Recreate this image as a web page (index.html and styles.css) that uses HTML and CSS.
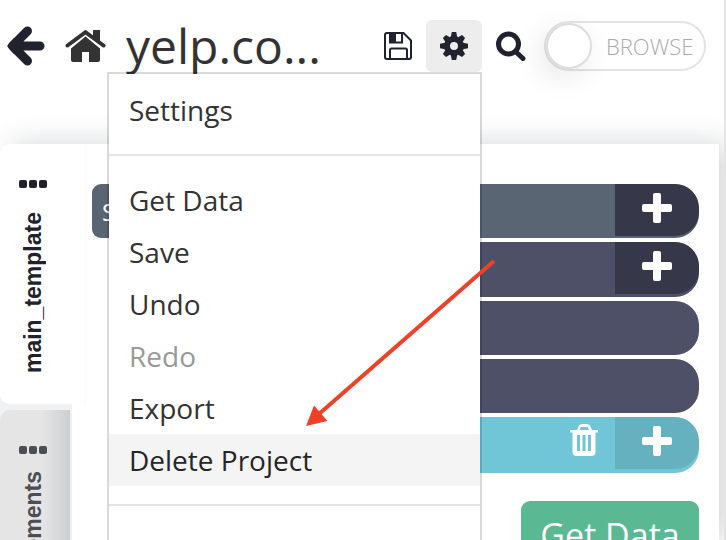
FILE: index.html
```
<!DOCTYPE html>
<html lang="en">
<head>
  <meta charset="UTF-8" />
  <meta name="viewport" content="width=device-width, initial-scale=1.0"/>
  <title>yelp.com project</title>
  <link rel="stylesheet" href="styles.css">
</head>
<body>

  <svg class="sprites" aria-hidden="true">
    <symbol id="plus" viewBox="0 0 30 30">
      <path d="M13 0h4a2 2 0 0 1 2 2v9h9a2 2 0 0 1 2 2v4a2 2 0 0 1-2 2h-9v9a2 2 0 0 1-2 2h-4a2 2 0 0 1-2-2v-9H2a2 2 0 0 1-2-2v-4a2 2 0 0 1 2-2h9V2a2 2 0 0 1 2-2z"/>
    </symbol>
    <symbol id="trash" viewBox="0 0 30 32">
      <path fill-rule="evenodd" d="M8 6l2-4.500Q11 0 13 0h5q2 0 3 1.500L23 6h6v2.500h-2.500V28q0 4-4 4h-15q-4 0-4-4V8.500H1V6zM10.500 6h9.500l-1.300-3h-6.900zM8 11v16h3V11zM13.500 11v16h3V11zM19 11v16h3V11z"/>
    </symbol>
  </svg>

  <header class="toolbar">
    <a class="back" href="#" aria-label="Back">
      <svg width="38" height="40" viewBox="0 0 38 40">
        <path class="icon-line" d="M20.500 5L5.500 20l15 15M7 20h26"/>
        <path d="M0 20L7 12h8v16H7z"/>
      </svg>
    </a>
    <a class="home" href="#" aria-label="Home">
      <svg width="41" height="33" viewBox="0 0 41 33">
        <path d="M28 0h7v12.500L28 7z"/>
        <path d="M20.500 6.500L35 18.500V30q0 2-2 2h-9V22h-7v10H8q-2 0-2-2V18.500z"/>
        <path class="roof" d="M2.500 15.500L20.500 2.200 38.500 15.500"/>
      </svg>
    </a>
    <h1>yelp.co...</h1>
    <button class="save" type="button" aria-label="Save">
      <svg width="28" height="28" viewBox="0 0 28 28">
        <path class="disk" d="M3 1h16.500L27 8.500V25q0 2-2 2H3q-2 0-2-2V3q0-2 2-2zM6 1v9.500h12V1M6 27V18q0-1.500 1.500-1.500h14q1.500 0 1.500 1.500v9"/>
        <path d="M6 1h6v9H6z"/>
      </svg>
    </button>
    <div class="dropdown">
      <button class="gear" type="button" aria-label="Options" aria-expanded="true">
        <svg width="28" height="28" viewBox="-14 -14 28 28">
          <circle class="gear-ring" r="7"/>
          <path d="M-3.200-9L-2.200-14h4.400l1 5zM-3.200 9L-2.200 14h4.400l1-5zM-9-3.200L-14-2.200v4.400l5 1zM9-3.200L14-2.200v4.400l-5 1z"/>
          <path transform="rotate(45)" d="M-3.200-9L-2.200-13.500h4.400l1 4.500zM-3.200 9L-2.200 13.500h4.400l1-4.500zM-9-3.200L-13.500-2.200v4.400l4.500 1zM9-3.200L13.500-2.200v4.400l-4.500 1z"/>
        </svg>
      </button>
      <ul class="menu">
        <li><a href="#">Settings</a></li>
        <li class="divider"></li>
        <li><a href="#">Get Data</a></li>
        <li><a href="#">Save</a></li>
        <li><a href="#">Undo</a></li>
        <li><a class="disabled" href="#">Redo</a></li>
        <li><a href="#">Export</a></li>
        <li><a class="active" href="#">Delete Project</a></li>
        <li class="divider"></li>
      </ul>
    </div>
    <button class="search" type="button" aria-label="Search">
      <svg width="30" height="30" viewBox="0 0 30 30">
        <circle class="lens" cx="12.500" cy="13" r="10"/>
        <path class="handle" d="M20 21l7 6.500"/>
      </svg>
    </button>
    <label class="switch">
      <input type="checkbox">
      <span class="knob"></span>
      <span>BROWSE</span>
    </label>
  </header>

  <main class="panel">
    <nav class="tabs">
      <a class="tab current" href="#">
        <span class="dots"><i></i><i></i><i></i></span>
        <span class="tab-name">main_template</span>
      </a>
      <a class="tab" href="#">
        <span class="dots"><i></i><i></i><i></i></span>
        <span class="tab-name">elements</span>
      </a>
    </nav>
    <section class="commands">
      <div class="command page">
        <span>Select</span>
        <button class="add" type="button" aria-label="Add"><svg width="30" height="30"><use href="#plus"/></svg></button>
      </div>
      <div class="command child group">
        <button class="add" type="button" aria-label="Add"><svg width="30" height="30"><use href="#plus"/></svg></button>
      </div>
      <div class="command child"></div>
      <div class="command child"></div>
      <div class="command child selected">
        <button class="trash" type="button" aria-label="Delete"><svg width="30" height="32"><use href="#trash"/></svg></button>
        <button class="add" type="button" aria-label="Add"><svg width="30" height="30"><use href="#plus"/></svg></button>
      </div>
      <button class="get-data" type="button">Get Data</button>
    </section>
  </main>

  <svg class="pointer" width="190" height="168" viewBox="0 0 190 168" aria-hidden="true">
    <path class="shaft" d="M188 2L13 155"/>
    <path d="M0 167L8 146.500 21.500 162z"/>
  </svg>

</body>
</html>
```

FILE: styles.css
```
* {
  box-sizing: border-box;
}

body {
  position: relative;
  display: flex;
  flex-direction: column;
  height: 100vh;
  margin: 0;
  overflow: hidden;
  border-right: 2px solid #e4e4e4;
  background-color: #fff;
  color: #333;
  font-family: 'Open Sans', 'Noto Sans', sans-serif;
}

a {
  color: inherit;
  text-decoration: none;
}

button {
  display: flex;
  align-items: center;
  justify-content: center;
  border: none;
  padding: 0;
  background: none;
  color: #20222d;
  font-family: inherit;
  cursor: pointer;
}

svg {
  display: block;
  fill: currentColor;
}

.sprites {
  position: absolute;
  width: 0;
  height: 0;
}

/* toolbar */

.toolbar {
  position: relative;
  z-index: 2;
  display: flex;
  align-items: center;
  height: 92px;
  padding: 0 18px 0 7px;
  flex-shrink: 0;
}

.back {
  margin-right: 20px;
  color: #20222d;
}

.icon-line {
  fill: none;
  stroke: currentColor;
  stroke-width: 9;
  stroke-linecap: round;
  stroke-linejoin: round;
}

.home {
  margin-right: 20px;
}

.roof {
  fill: none;
  stroke: currentColor;
  stroke-width: 4;
  stroke-linecap: round;
}

h1 {
  flex: 1;
  margin: 0;
  font-size: 48px;
  font-weight: 400;
  line-height: 68px;
  white-space: nowrap;
}

.save {
  margin-right: 14px;
}

.disk {
  fill: none;
  stroke: currentColor;
  stroke-width: 2;
}

.dropdown {
  position: relative;
  margin-right: 14px;
}

.gear {
  width: 56px;
  height: 52px;
  border-radius: 6px;
  background-color: #ededed;
}

.gear-ring {
  fill: none;
  stroke: currentColor;
  stroke-width: 6;
}

.lens,
.handle {
  fill: none;
  stroke: currentColor;
  stroke-width: 5;
  stroke-linecap: round;
}

.menu {
  position: absolute;
  top: 100%;
  right: 0;
  width: 375px;
  height: calc(100vh - 72px);
  margin: 0;
  padding: 10px 0;
  border: 2px solid rgba(0, 0, 0, 0.15);
  border-bottom: none;
  background-color: #fff;
  background-clip: padding-box;
  list-style: none;
}

.menu a {
  display: block;
  padding: 6px 20px;
  font-size: 28px;
  line-height: 40px;
}

.menu .disabled {
  color: #999;
}

.menu .active {
  background-color: #f4f4f4;
  color: #262626;
}

.divider {
  height: 2px;
  margin: 18px 0;
  background-color: #e5e5e5;
}

.search {
  margin-right: 18px;
}

.switch {
  display: flex;
  align-items: center;
  gap: 14px;
  width: 162px;
  height: 50px;
  border: 2px solid #e4e4e4;
  border-radius: 25px;
  color: #aaa;
  font-size: 22px;
  font-weight: 300;
}

.switch input {
  position: absolute;
  opacity: 0;
}

.knob {
  width: 46px;
  height: 46px;
  border: 2px solid #ddd;
  border-radius: 50%;
  background-color: #fff;
  box-shadow: -6px 8px 30px rgba(0, 0, 0, 0.1);
}

/* panel */

.panel {
  display: flex;
  flex: 1;
  min-height: 0;
  margin: 52px 5px 0 0;
  border-radius: 10px 0 0 0;
  background-color: #fff;
  box-shadow: 10px 0 30px rgba(40, 50, 60, 0.2);
}

.tabs {
  display: flex;
  flex-direction: column;
  gap: 6px;
  width: 92px;
  background: linear-gradient(to right, #f0f1f2 72px, #fff 72px);
  border-radius: 10px 0 0 0;
}

.tab {
  display: flex;
  flex-direction: column;
  align-items: center;
  gap: 17px;
  flex-shrink: 0;
  width: 70px;
  height: 260px;
  padding: 36px 4px 0 0;
  border-radius: 10px 0 0 0;
  background: linear-gradient(to right, #e5e5e5 60%, #cccfd1);
  color: #4b4e55;
}

.current {
  gap: 24px;
  width: 86px;
  padding-right: 18px;
  border-right: 2px solid #fcfcfc;
  border-radius: 10px 0 0 10px;
  background: #fff;
  color: #20222d;
}

.dots {
  display: flex;
  gap: 2px;
}

.dots i {
  width: 8px;
  height: 8px;
  border-radius: 2px;
  background-color: currentColor;
}

.tab-name {
  writing-mode: vertical-rl;
  transform: rotate(180deg);
  font-family: 'Liberation Sans', Arial, sans-serif;
  font-size: 23px;
  font-weight: 700;
  line-height: 24px;
}

.commands {
  display: flex;
  flex-direction: column;
  flex: 1;
  gap: 4px;
  padding: 40px 20px 0 0;
}

.command {
  display: flex;
  align-items: center;
  justify-content: flex-end;
  flex-shrink: 0;
  height: 54px;
  overflow: hidden;
  border-radius: 9px 24px 24px 9px;
  background-color: #4d5066;
}

.command button {
  align-self: flex-start;
  height: 52px;
  color: #fff;
}

.page {
  justify-content: space-between;
  padding-left: 10px;
  background-color: #596573;
  color: #fff;
  font-size: 24px;
}

.child {
  margin-left: 40px;
}

.group {
  height: 55px;
}

.add {
  width: 84px;
  padding-bottom: 4px;
  border-radius: 0 24px 24px 0;
  background-color: #36384a;
}

.trash {
  margin-right: 16px;
  padding-bottom: 6px;
}

.selected {
  height: 56px;
  background-color: #70c5d7;
}

.selected .add {
  background-color: #65b1c0;
}

.get-data {
  align-self: flex-end;
  flex-shrink: 0;
  width: 178px;
  height: 68px;
  margin-top: 24px;
  border-radius: 9px;
  background-color: #5ab992;
  color: #fff;
  font-size: 34px;
}

/* red arrow aimed at the delete entry */

.pointer {
  position: absolute;
  top: 259px;
  left: 306px;
  z-index: 3;
  color: #ee4128;
}

.shaft {
  fill: none;
  stroke: currentColor;
  stroke-width: 4;
}
```
